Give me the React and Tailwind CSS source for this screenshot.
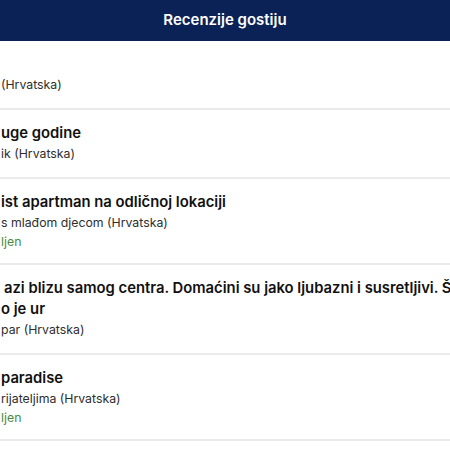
import React from 'react';

const reviews = [
  { title: '', sub: '(Hrvatska)' },
  { title: 'uge godine', sub: 'ik (Hrvatska)' },
  { title: 'ist apartman na odličnoj lokaciji', sub: 's mlađom djecom (Hrvatska)', note: 'ljen' },
  { title: 'azi blizu samog centra. Domaćini su jako ljubazni i susretljivi. Što', title2: 'o je ur', sub: 'par (Hrvatska)', indent: true },
  { title: 'paradise', sub: 'rijateljima (Hrvatska)', note: 'ljen' },
];

function ReviewRow({ r }) {
  return (
    <div className="flex flex-col border-b-2 border-[#ebebeb] pt-[12px] pb-[13px] pl-[1px]">
      <div className={`h-[22px] whitespace-nowrap overflow-hidden text-[14.8px] font-semibold text-[#111111] leading-[22px] ${r.indent ? 'pl-[3px]' : ''}`}>
        {r.title}
      </div>
      {r.title2 && (
        <div className="h-[21px] text-[14.8px] font-semibold text-[#111111] leading-[21px]">{r.title2}</div>
      )}
      <div className="h-[20px] text-[12.3px] text-[#2e2e2e] leading-[20px]">{r.sub}</div>
      {r.note && <div className="h-[17px] text-[12.3px] text-[#4b8a3e] leading-[17px]">{r.note}</div>}
    </div>
  );
}

export default function App() {
  return (
    <div className="w-[450px] h-[450px] overflow-hidden bg-white" style={{ fontFamily: 'Inter, "Noto Sans", sans-serif' }}>
      <div className="h-[41px] bg-[#0b2257] flex items-center justify-center">
        <span className="text-white text-[15px] font-semibold">Recenzije gostiju</span>
      </div>
      <div className="flex flex-col">
        {reviews.map((r, i) => (
          <ReviewRow key={i} r={r} />
        ))}
      </div>
    </div>
  );
}
